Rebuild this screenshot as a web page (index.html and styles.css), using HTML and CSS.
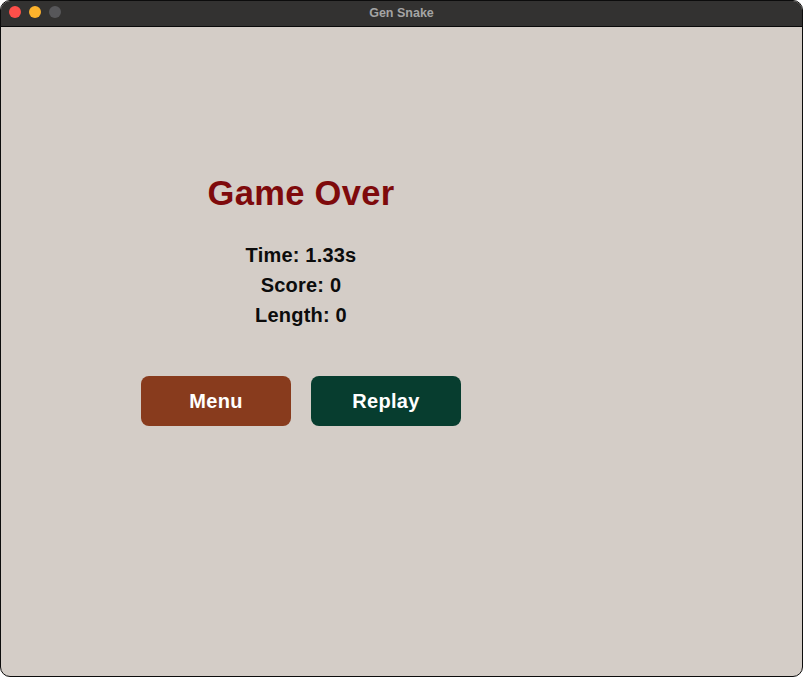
FILE: index.html
```html
<!DOCTYPE html>
<html>
<head>
<meta charset="utf-8">
<link rel="stylesheet" href="styles.css">
</head>
<body>
<div class="window">
  <div class="titlebar">
    <div class="lights">
      <span class="light red"></span>
      <span class="light yellow"></span>
      <span class="light grey"></span>
    </div>
    <div class="title">Gen Snake</div>
  </div>
  <div class="content">
    <div class="panel">
      <h1 class="heading">Game Over</h1>
      <div class="stats">
        <div class="stat">Time: 1.33s</div>
        <div class="stat">Score: 0</div>
        <div class="stat">Length: 0</div>
      </div>
      <div class="buttons">
        <button class="btn btn-menu">Menu</button>
        <button class="btn btn-replay">Replay</button>
      </div>
    </div>
  </div>
</div>
</body>
</html>
```

FILE: styles.css
```css
html, body {
  margin: 0;
  padding: 0;
  background: #ffffff;
  width: 803px;
  height: 677px;
  overflow: hidden;
}
.window {
  box-sizing: border-box;
  width: 803px;
  height: 677px;
  border: 1px solid #0c0c0c;
  border-radius: 10px;
  overflow: hidden;
  display: flex;
  flex-direction: column;
  background: #d4cdc7;
}
.titlebar {
  position: relative;
  height: 25px;
  background: #333231;
  border-bottom: 1px solid #0a0a0a;
  display: flex;
  align-items: center;
  justify-content: center;
  flex-shrink: 0;
}
.lights {
  position: absolute;
  left: 8px;
  top: 5px;
  display: flex;
  gap: 8px;
}
.light {
  width: 12px;
  height: 12px;
  border-radius: 50%;
  display: block;
}
.red { background: #fe4f4a; }
.yellow { background: #fdb32c; }
.grey { background: #57575a; }
.title {
  font-family: "Liberation Sans", Arial, sans-serif;
  font-weight: bold;
  font-size: 12.5px;
  color: #a4a4a4;
  margin-top: -2px;
}
.content {
  flex: 1;
  display: flex;
}
.panel {
  width: 602px;
  margin-left: -1px;
  padding-top: 146px;
  display: flex;
  flex-direction: column;
  align-items: center;
  font-family: "Liberation Sans", Arial, sans-serif;
}
.heading {
  margin: 0;
  font-size: 34.5px;
  line-height: 40px;
  font-weight: bold;
  color: #7e0a0c;
  letter-spacing: 0.3px;
}
.stats {
  margin-top: 27px;
  display: flex;
  flex-direction: column;
  align-items: center;
}
.stat {
  font-size: 20px;
  line-height: 30px;
  font-weight: bold;
  color: #0c0c0c;
  letter-spacing: 0.2px;
}
.buttons {
  margin-top: 46px;
  display: flex;
  gap: 20px;
}
.btn {
  width: 150px;
  height: 50px;
  border: none;
  border-radius: 8px;
  color: #ffffff;
  font-family: "Liberation Sans", Arial, sans-serif;
  font-weight: bold;
  font-size: 20px;
  padding: 0;
  letter-spacing: 0.3px;
}
.btn-menu { background: #883b1d; }
.btn-replay { background: #073d2f; }
```
